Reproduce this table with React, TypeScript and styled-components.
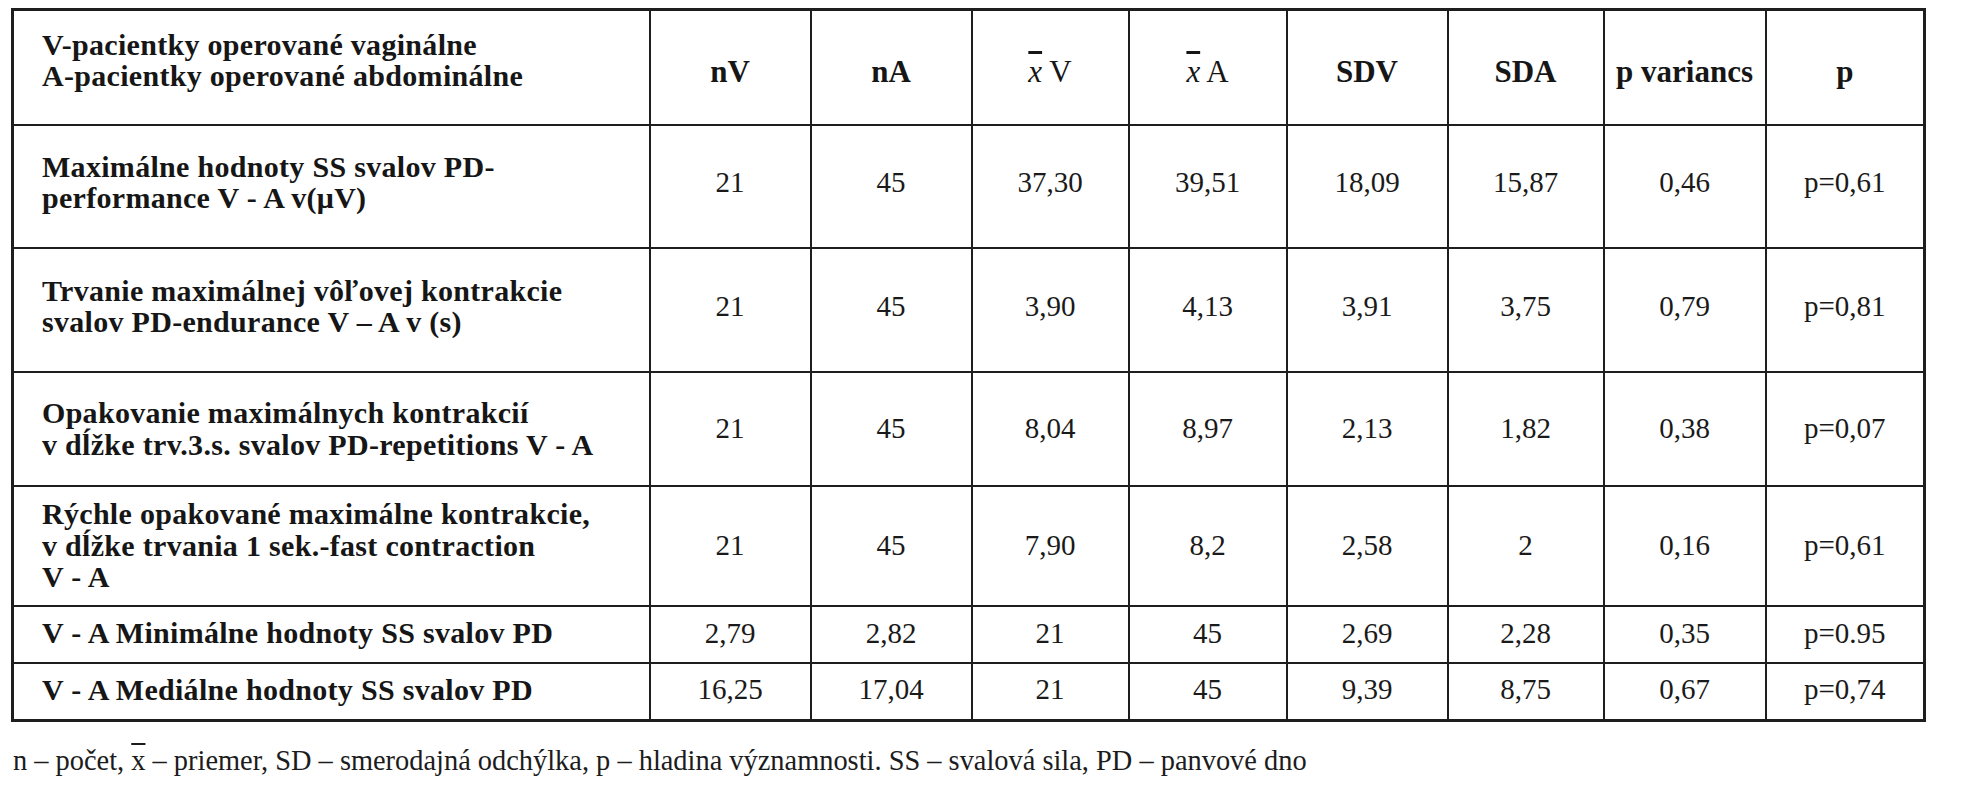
import React from "react";
import styled, { createGlobalStyle } from "styled-components";

const Global = createGlobalStyle`
  html, body {
    margin: 0;
    padding: 0;
    background: #ffffff;
  }
  body {
    font-family: "Liberation Serif", "Times New Roman", serif;
    color: #1c1c1c;
  }
`;

const Page = styled.div`
  padding: 8px 0 0 11px;
  width: 1967px;
  height: 800px;
  box-sizing: border-box;
  display: flex;
  flex-direction: column;
  gap: 23px;
`;

const Table = styled.table`
  border-collapse: collapse;
  table-layout: fixed;
  width: 1914px;
  border: 3px solid #1e1e1e;
`;

const Col = styled.col<{ $w: number }>`
  width: ${(p) => p.$w}px;
`;

const Row = styled.tr<{ $h: number }>`
  height: ${(p) => p.$h}px;
`;

const LabelCell = styled.td<{ $lift: number }>`
  border: 2px solid #1e1e1e;
  padding: 0 0 ${(p) => p.$lift}px 28px;
  font-weight: bold;
  font-size: 30px;
  line-height: 31.5px;
  letter-spacing: 0.3px;
  text-align: left;
  vertical-align: middle;
  white-space: nowrap;
  color: #161616;
`;

const HeadCell = styled.td<{ $light?: boolean }>`
  border: 2px solid #1e1e1e;
  padding: 10px 0 0 0;
  font-weight: ${(p) => (p.$light ? "normal" : "bold")};
  font-size: 31px;
  text-align: center;
  vertical-align: middle;
  white-space: nowrap;
  color: #161616;
`;

const NumCell = styled.td<{ $lift: number }>`
  border: 2px solid #1e1e1e;
  padding: 0 0 ${(p) => p.$lift}px 0;
  font-size: 29px;
  text-align: center;
  vertical-align: middle;
  white-space: nowrap;
  color: #1a1a1a;
`;

const Mean = styled.span<{ $italic?: boolean }>`
  text-decoration: overline;
  font-style: ${(p) => (p.$italic ? "italic" : "normal")};
`;

const Note = styled.div`
  font-size: 28.4px;
  color: #1c1c1c;
  padding-left: 2px;
  white-space: nowrap;
`;

type DataRow = {
  label: React.ReactNode;
  h: number;
  lift: number;
  values: string[];
};

const widths = [637, 161, 161, 157, 158, 161, 156, 162, 159];

const rows: DataRow[] = [
  {
    label: (
      <>
        Maximálne hodnoty SS svalov PD-
        <br />
        performance V - A v(μV)
      </>
    ),
    h: 123,
    lift: 8,
    values: ["21", "45", "37,30", "39,51", "18,09", "15,87", "0,46", "p=0,61"],
  },
  {
    label: (
      <>
        Trvanie maximálnej vôľovej kontrakcie
        <br />
        svalov PD-endurance V – A v (s)
      </>
    ),
    h: 124,
    lift: 7,
    values: ["21", "45", "3,90", "4,13", "3,91", "3,75", "0,79", "p=0,81"],
  },
  {
    label: (
      <>
        Opakovanie maximálnych kontrakcií
        <br />
        v dĺžke trv.3.s. svalov PD-repetitions V - A
      </>
    ),
    h: 114,
    lift: 0,
    values: ["21", "45", "8,04", "8,97", "2,13", "1,82", "0,38", "p=0,07"],
  },
  {
    label: (
      <>
        Rýchle opakované maximálne kontrakcie,
        <br />
        v dĺžke trvania 1 sek.-fast contraction
        <br />V - A
      </>
    ),
    h: 120,
    lift: 0,
    values: ["21", "45", "7,90", "8,2", "2,58", "2", "0,16", "p=0,61"],
  },
  {
    label: <>V - A Minimálne hodnoty SS svalov PD</>,
    h: 57,
    lift: 2,
    values: ["2,79", "2,82", "21", "45", "2,69", "2,28", "0,35", "p=0.95"],
  },
  {
    label: <>V - A Mediálne hodnoty SS svalov PD</>,
    h: 58,
    lift: 4,
    values: ["16,25", "17,04", "21", "45", "9,39", "8,75", "0,67", "p=0,74"],
  },
];

export default function App() {
  return (
    <>
      <Global />
      <Page>
        <Table>
          <colgroup>
            {widths.map((w, i) => (
              <Col key={i} $w={w} />
            ))}
          </colgroup>
          <tbody>
            <Row $h={115}>
              <LabelCell $lift={14}>
                V-pacientky operované vaginálne
                <br />
                A-pacientky operované abdominálne
              </LabelCell>
              <HeadCell>nV</HeadCell>
              <HeadCell>nA</HeadCell>
              <HeadCell $light>
                <Mean $italic>x</Mean> V
              </HeadCell>
              <HeadCell $light>
                <Mean $italic>x</Mean> A
              </HeadCell>
              <HeadCell>SDV</HeadCell>
              <HeadCell>SDA</HeadCell>
              <HeadCell>p variancs</HeadCell>
              <HeadCell>p</HeadCell>
            </Row>
            {rows.map((r, i) => (
              <Row key={i} $h={r.h}>
                <LabelCell $lift={r.lift}>{r.label}</LabelCell>
                {r.values.map((v, j) => (
                  <NumCell key={j} $lift={r.lift}>
                    {v}
                  </NumCell>
                ))}
              </Row>
            ))}
          </tbody>
        </Table>
        <Note>
          n – počet, <Mean>x</Mean> – priemer, SD – smerodajná odchýlka, p – hladina významnosti. SS –
          svalová sila, PD – panvové dno
        </Note>
      </Page>
    </>
  );
}
